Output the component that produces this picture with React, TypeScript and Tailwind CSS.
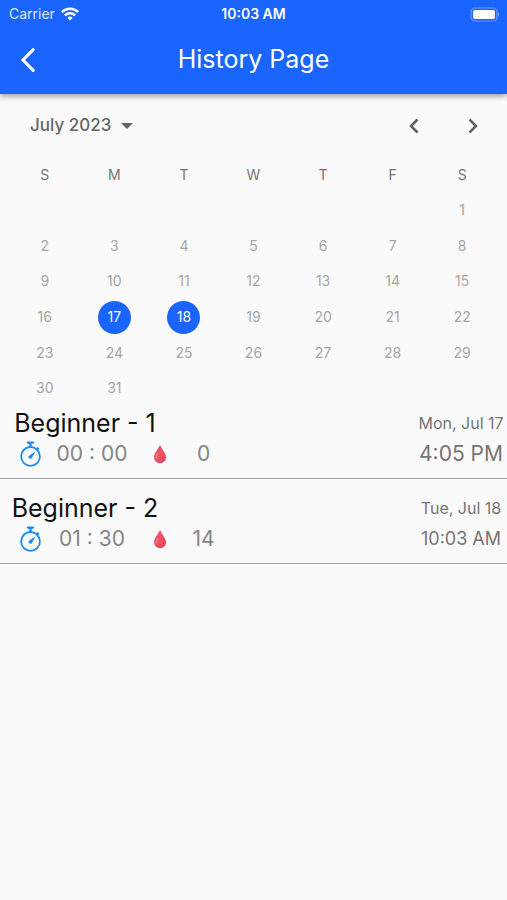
const weekdays = ["S", "M", "T", "W", "T", "F", "S"];
const firstWeekday = 6;
const days = Array.from({ length: 31 }, (_, i) => i + 1);
const activeDays = [17, 18];

const sessions = [
  { title: "Beginner - 1", duration: "00 : 00", count: "0", date: "Mon, Jul 17", time: "4:05 PM", timeClass: "text-[21px]" },
  { title: "Beginner - 2", duration: "01 : 30", count: "14", date: "Tue, Jul 18", time: "10:03 AM", timeClass: "text-lg" },
];

function WifiIcon() {
  return (
    <svg width="18" height="14" viewBox="0 0 18 14" fill="none" stroke="white" strokeWidth="2.4" aria-hidden="true">
      <path d="M0.9 5.1 A11.5 11.5 0 0 1 17.1 5.1" />
      <path d="M3.9 8.3 A7.3 7.3 0 0 1 14.1 8.3" />
      <path d="M9 13.6 L6.3 10.9 A3.9 3.9 0 0 1 11.7 10.9 Z" fill="white" stroke="none" />
    </svg>
  );
}

function BatteryIcon() {
  return (
    <svg width="31" height="15" viewBox="0 0 31 15" fill="none" aria-hidden="true">
      <rect x="2" y="1" width="26" height="13" rx="4" stroke="#6b9aff" strokeWidth="1.2" />
      <rect x="4" y="3" width="22" height="9" rx="2" fill="white" />
      <path d="M29 5 Q31.4 7.5 29 10 Z" fill="#6b9aff" />
    </svg>
  );
}

function StopwatchIcon() {
  return (
    <svg width="22" height="26" viewBox="0 0 22 26" fill="none" stroke="#1a8cf5" aria-hidden="true">
      <circle cx="10.5" cy="15.4" r="9.4" strokeWidth="1.8" />
      <path d="M7.8 1.6 H13.2" strokeWidth="2.2" strokeLinecap="round" />
      <path d="M10.5 2 V6" strokeWidth="2.4" />
      <path d="M17 6.6 L18.8 8.4" strokeWidth="1.8" />
      <path d="M15.6 10.2 L12.2 16.4 A1.8 1.8 0 1 1 9.4 14.4 Z" fill="#1a8cf5" stroke="none" />
    </svg>
  );
}

function DropIcon() {
  return (
    <svg width="14" height="20" viewBox="0 0 14 20" aria-hidden="true">
      <defs>
        <linearGradient id="drop" x1="0" y1="0" x2="1" y2="1">
          <stop offset="0" stopColor="#d9485a" />
          <stop offset="0.5" stopColor="#ee5468" />
          <stop offset="1" stopColor="#dc4257" />
        </linearGradient>
      </defs>
      <path d="M7 0.8 C8.2 4.6 13 9 13 13.4 A6 5.8 0 0 1 1 13.4 C1 9 5.8 4.6 7 0.8 Z" fill="url(#drop)" />
      <path d="M4.6 9.6 Q2.9 12 3.6 14.2" stroke="#f28490" strokeWidth="1.2" strokeLinecap="round" fill="none" />
    </svg>
  );
}

export default function App() {
  return (
    <div className="min-h-screen bg-[#fafafa] font-['Inter','Liberation_Sans',sans-serif] text-[#757575]">
      <header className="bg-[#1a64ff] text-white shadow-[0_2px_6px_rgba(0,0,0,0.4)]">
        <div className="grid h-7 grid-cols-3 items-center px-[7px]">
          <div className="flex items-center gap-1.5 pl-0.5 text-sm text-[#dbe6ff]">
            Carrier
            <WifiIcon />
          </div>
          <div className="text-center text-sm font-semibold">10:03 AM</div>
          <div className="flex justify-end">
            <BatteryIcon />
          </div>
        </div>
        <div className="grid h-[66px] grid-cols-[56px_1fr_56px] items-center pb-0.5">
          <button type="button" aria-label="Back" className="flex justify-center">
            <svg width="16" height="26" viewBox="0 0 16 26" fill="none" stroke="white" strokeWidth="3" strokeLinecap="round" strokeLinejoin="miter" aria-hidden="true">
              <path d="M13.2 2.6 L3 13 L13.2 23.4" />
            </svg>
          </button>
          <h1 className="text-center text-[25px]">History Page</h1>
        </div>
      </header>

      <main>
        <div className="flex h-[63px] items-center justify-between pr-5 pl-[30px]">
          <button type="button" className="flex items-center gap-2.5 text-[17px] font-medium text-[#666]">
            July 2023
            <svg width="12" height="6" viewBox="0 0 12 6" fill="#616161" aria-hidden="true">
              <path d="M0 0 H12 L6 6 Z" />
            </svg>
          </button>
          <div className="flex gap-[31px]">
            <button type="button" aria-label="Previous month" className="flex h-7 w-7 items-center justify-center">
              <svg width="10" height="16" viewBox="0 0 10 16" fill="none" stroke="#616161" strokeWidth="2.5" aria-hidden="true">
                <path d="M8.5 1.5 L2 8 L8.5 14.5" />
              </svg>
            </button>
            <button type="button" aria-label="Next month" className="flex h-7 w-7 items-center justify-center">
              <svg width="10" height="16" viewBox="0 0 10 16" fill="none" stroke="#616161" strokeWidth="2.5" aria-hidden="true">
                <path d="M1.5 1.5 L8 8 L1.5 14.5" />
              </svg>
            </button>
          </div>
        </div>

        <div className="grid h-[249px] grid-cols-7 grid-rows-7 place-items-center px-2.5 text-sm">
          {weekdays.map((day, i) => (
            <span key={i}>{day}</span>
          ))}
          {days.map((day) => (
            <button
              key={day}
              type="button"
              style={day === 1 ? { gridColumnStart: firstWeekday + 1 } : undefined}
              className={
                activeDays.includes(day)
                  ? "h-[33px] w-[33px] rounded-full bg-[#1a64ff] text-white"
                  : "h-[33px] w-[33px] rounded-full text-[#a6a6a6]"
              }
            >
              {day}
            </button>
          ))}
        </div>

        <ul className="flex flex-col gap-3">
          {sessions.map((session) => (
            <li key={session.title} className="flex justify-between border-b border-[#a3a3a3] pb-[11px]">
              <div className="w-[229px]">
                <h2 className="w-[170px] text-center text-[25px] leading-[34px] text-[#111]">{session.title}</h2>
                <div className="grid h-[27px] grid-cols-[22px_100px_36px_1fr] items-center pl-5 text-center text-[21px] leading-[27px] text-[#858585]">
                  <StopwatchIcon />
                  <span>{session.duration}</span>
                  <span className="flex justify-center">
                    <DropIcon />
                  </span>
                  <span>{session.count}</span>
                </div>
              </div>
              <div className="w-[92px] text-center whitespace-nowrap">
                <div className="text-base leading-[34px]">{session.date}</div>
                <div className={`leading-[27px] ${session.timeClass}`}>{session.time}</div>
              </div>
            </li>
          ))}
        </ul>
      </main>
    </div>
  );
}
